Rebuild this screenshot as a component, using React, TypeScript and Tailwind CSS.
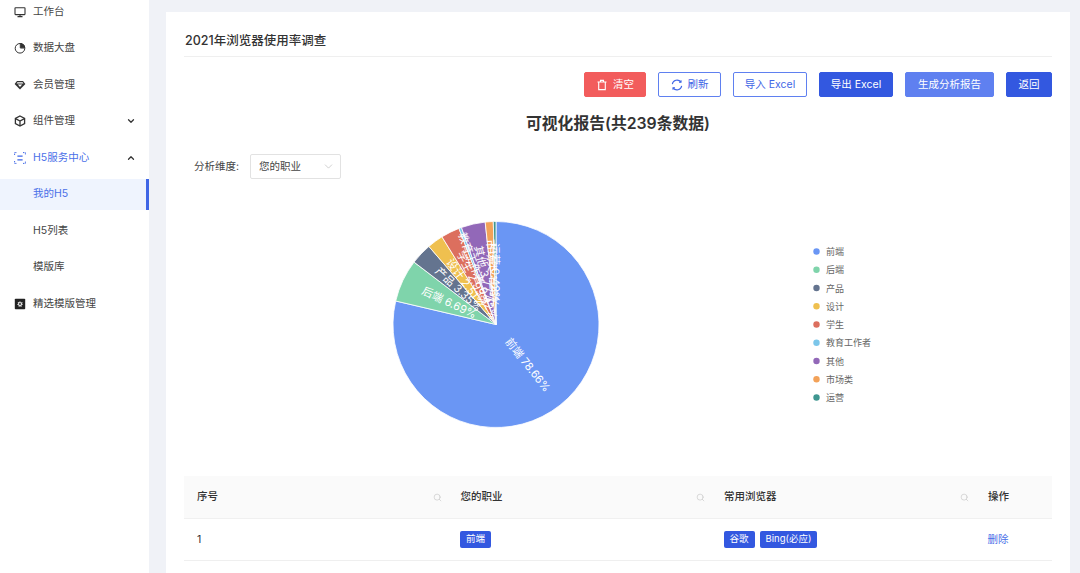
import React from "react";
import { ChevronDown, ChevronUp, Search } from "lucide-react";

const cjk = { fontFamily: '"Inter","Noto Sans CJK SC",sans-serif' };

const ic = "w-[12px] h-[12px] shrink-0";
const Monitor = () => (
  <svg viewBox="0 0 12 12" className={ic} fill="none" stroke="#333" strokeWidth="1.1">
    <rect x="1" y="1.8" width="10" height="6.8" rx=".5" />
    <path d="M3.5 10.6h5M6 8.6v2" />
  </svg>
);
const Pie = () => (
  <svg viewBox="0 0 12 12" className={ic} fill="none" stroke="#333" strokeWidth="1">
    <circle cx="6" cy="6.300" r="4.800" />
    <path d="M6.300 1.500V6h4.500" />
    <path d="M7 1.500a4.600 4.600 0 0 1 3.800 3.800H7z" fill="#333" />
  </svg>
);
const Gem = () => (
  <svg viewBox="0 0 12 12" className={ic}>
    <path d="M3 2h6l2.400 3L6 10.600.6 5z" fill="#333" />
    <path d="M3.400 3.200h5.200l.8 1.400H2.600zM3.800 5.600h4.400L6 8z" fill="#fff" />
  </svg>
);
const Cube = () => (
  <svg viewBox="0 0 12 12" className={ic} fill="none" stroke="#333" strokeWidth="1.300">
    <path d="M6 1l4.600 2.500v5L6 11 1.400 8.500v-5z" />
    <path d="M1.600 3.600L6 6l4.400-2.400M6 6v4.800" />
  </svg>
);
const Scan = () => (
  <svg viewBox="0 0 12 12" className={ic} fill="none" stroke="#3f66e6" strokeWidth="1">
    <path d="M.6 3V.6H3M9 .6h2.400V3M.6 9v2.400H3M9 11.400h2.400V9" strokeDasharray="1.400 .8" />
    <path d="M3.400 4.200h5.200M3.400 7.800h5.200" strokeWidth="1.300" />
  </svg>
);
const Flower = () => (
  <svg viewBox="0 0 12 12" className={ic}>
    <rect x=".8" y=".8" width="10.400" height="10.400" rx=".8" fill="#222" />
    <path d="M6 3l.9 1.500L8.600 4l-.5 1.700L9 6.500l-1.500.8.100 1.600-1.600-.6L4.800 9l-.3-1.700L3 6.500l1.200-1L3.700 3.900l1.500.4z" fill="#ddd" />
    <circle cx="6" cy="6" r=".9" fill="#222" />
  </svg>
);
const Trash = () => (
  <svg viewBox="0 0 12 12" className="w-[12px] h-[12px]" fill="none" stroke="#fff" strokeWidth="1.100">
    <path d="M1.500 3h9M4.500 3V1.400h3V3M2.700 3v7.600h6.600V3" />
  </svg>
);
const Refresh = () => (
  <svg viewBox="0 0 12 12" className="w-[12px] h-[12px]" fill="none" stroke="#3f66e6" strokeWidth="1.100">
    <path d="M1.300 5.200A4.800 4.800 0 0 1 9.900 3.100" />
    <path d="M10.700 6.800A4.800 4.800 0 0 1 2.100 8.900" />
    <path d="M10 1.300v2H8M2 10.700v-2h2" />
  </svg>
);

function MenuItem({ icon, label, arrow, active, selected, sub }: { icon?: React.ReactNode; label: string; arrow?: "up" | "down"; active?: boolean; selected?: boolean; sub?: boolean }) {
  return (
    <div className={`h-[30.500px] mb-[6px] flex items-center pl-[14px] pr-[12px] text-[10.500px] border-r-[3px] ${selected ? "bg-[#eff4fe] border-[#3f66e6]" : "border-transparent"} ${active || selected ? "text-[#4a6fe8]" : "text-[#444]"}`}>
      <span className="w-[19px] shrink-0 flex">{sub ? null : icon}</span>
      <span className="flex-1 whitespace-nowrap">{label}</span>
      {arrow === "down" && <ChevronDown size={10} strokeWidth={3} color="#333" className="mr-[-2px]" />}
      {arrow === "up" && <ChevronUp size={10} strokeWidth={3} color="#333" className="mr-[-2px]" />}
    </div>
  );
}

function Btn({ className, children }: { className: string; children: React.ReactNode }) {
  return <button className={`h-[25px] rounded-[2px] flex items-center justify-center text-[10.500px] border ${className}`}>{children}</button>;
}

const data = [
  { name: "前端", v: 188, c: "#6a96f4", p: "78.66" },
  { name: "后端", v: 16, c: "#7fd4ab", p: "6.69" },
  { name: "产品", v: 8, c: "#64748f", p: "3.35" },
  { name: "设计", v: 6, c: "#efc04f", p: "2.51" },
  { name: "学生", v: 7, c: "#dc6f5e", p: "2.93" },
  { name: "教育工作者", v: 1, c: "#7cc6ea", p: "0.42" },
  { name: "其他", v: 9, c: "#9268b8", p: "3.77" },
  { name: "市场类", v: 3, c: "#f3a259", p: "1.26" },
  { name: "运营", v: 1, c: "#3f9690", p: "0.42" },
];

function Chart() {
  const cx = 312;
  const cy = 134.5;
  const r = 103;
  let acc = 0;
  const total = 239;
  const parts = data.map((d) => {
    const a0 = (acc / total) * Math.PI * 2;
    acc += d.v;
    const a1 = (acc / total) * Math.PI * 2;
    const pt = (a: number, rr: number) => [cx + rr * Math.sin(a), cy - rr * Math.cos(a)];
    const [x0, y0] = pt(a0, r);
    const [x1, y1] = pt(a1, r);
    const mid = (a0 + a1) / 2;
    const [lx, ly] = pt(mid, r / 2);
    const deg = (mid * 180) / Math.PI;
    const rot = deg < 180 ? deg - 90 : deg - 270;
    return { d, path: `M${cx} ${cy}L${x0} ${y0}A${r} ${r} 0 ${a1 - a0 > Math.PI ? 1 : 0} 1 ${x1} ${y1}Z`, lx, ly, rot };
  });
  return (
    <svg width="868" height="270" viewBox="0 0 868 270" className="block" style={cjk}>
      {parts.map((p) => (
        <path key={p.d.name} d={p.path} fill={p.d.c} stroke="#fff" strokeWidth="0.800" />
      ))}
      {parts.map((p) => (
        <text key={p.d.name} x={p.lx} y={p.ly} fill="#fff" fontSize="11" textAnchor="middle" dominantBaseline="central" transform={`rotate(${p.rot} ${p.lx} ${p.ly})`}>
          {`${p.d.name} ${p.d.p}%`}
        </text>
      ))}
      {data.map((d, i) => (
        <g key={d.name}>
          <circle cx="632.500" cy={61.500 + i * 18.250} r="3.200" fill={d.c} />
          <text x="642" y={61.500 + i * 18.250} fontSize="9" fill="#666" dominantBaseline="central">
            {d.name}
          </text>
        </g>
      ))}
    </svg>
  );
}

const Tag = ({ children }: { children: React.ReactNode }) => (
  <span className="h-[17px] px-[6px] bg-[#3358e0] rounded-[2px] text-white text-[9.500px] flex items-center whitespace-nowrap">{children}</span>
);

const HeadCell = ({ label, search }: { label: string; search?: boolean }) => (
  <div className="flex items-center justify-between pl-[13px] pr-[6px] text-[10.500px] font-medium text-[#333]">
    <span>{label}</span>
    {search && <Search size={9} strokeWidth={1.500} color="#bfbfbf" />}
  </div>
);

export default function App() {
  return (
    <div className="w-[1080px] h-[573px] overflow-hidden flex bg-[#f0f2f7]" style={cjk}>
      <aside className="w-[148.500px] shrink-0 bg-white">
        <div className="mt-[-3.500px]">
          <MenuItem icon={<Monitor />} label="工作台" />
          <MenuItem icon={<Pie />} label="数据大盘" />
          <MenuItem icon={<Gem />} label="会员管理" />
          <MenuItem icon={<Cube />} label="组件管理" arrow="down" />
          <MenuItem icon={<Scan />} label="H5服务中心" arrow="up" active />
          <MenuItem sub label="我的H5" selected />
          <MenuItem sub label="H5列表" />
          <MenuItem sub label="模版库" />
          <MenuItem icon={<Flower />} label="精选模版管理" />
        </div>
      </aside>
      <main className="flex-1 pl-[17.500px] pr-[11px] pt-[12px]">
        <div className="bg-white h-[600px] px-[18px]">
          <div className="h-[45px] pt-[14px] pl-[1px] flex items-center border-b border-[#efefef] text-[12.500px] font-medium text-[#333]">2021年浏览器使用率调查</div>
          <div className="mt-[15px] flex justify-end gap-[12px]">
            <Btn className="w-[62px] bg-[#f25c5c] border-[#f25c5c] text-white gap-[5px]">
              <Trash />
              清空
            </Btn>
            <Btn className="w-[63px] bg-white border-[#5f80f0] text-[#3f66e6] gap-[5px]">
              <Refresh />
              刷新
            </Btn>
            <Btn className="w-[74px] bg-white border-[#5f80f0] text-[#3f66e6]">导入 Excel</Btn>
            <Btn className="w-[74px] bg-[#3358e0] border-[#3358e0] text-white">导出 Excel</Btn>
            <Btn className="w-[89px] bg-[#5f80f0] border-[#5f80f0] text-white">生成分析报告</Btn>
            <Btn className="w-[46px] bg-[#3358e0] border-[#3358e0] text-white">返回</Btn>
          </div>
          <div className="mt-[15px] text-center text-[15.800px] leading-[24px] font-semibold text-[#333]">可视化报告(共239条数据)</div>
          <div className="mt-[18px] flex items-center pl-[10px] text-[10.500px] text-[#444]">
            <span className="w-[56px]">分析维度:</span>
            <div className="w-[91px] h-[25px] border border-[#e2e2e2] rounded-[2px] flex items-center justify-between pl-[8px] pr-[5px]">
              <span>您的职业</span>
              <ChevronDown size={13} strokeWidth={1} color="#aaa" />
            </div>
          </div>
          <div className="mt-[11px]">
            <Chart />
          </div>
          <div className="mt-[16px]">
            <div className="grid grid-cols-[263.500px_263.500px_264px_77px] h-[43px] bg-[#fafafa] border-b border-[#f0f0f0]">
              <HeadCell label="序号" search />
              <HeadCell label="您的职业" search />
              <HeadCell label="常用浏览器" search />
              <HeadCell label="操作" />
            </div>
            <div className="grid grid-cols-[263.500px_263.500px_264px_77px] h-[42px] border-b border-[#efefef] items-center text-[10.500px] text-[#333]">
              <div className="pl-[13px]">1</div>
              <div className="pl-[12.500px] flex">
                <Tag>前端</Tag>
              </div>
              <div className="pl-[12.500px] flex gap-[5px]">
                <Tag>谷歌</Tag>
                <Tag>Bing(必应)</Tag>
              </div>
              <div className="pl-[12.500px] text-[#4a6fe8]">删除</div>
            </div>
          </div>
        </div>
      </main>
    </div>
  );
}
